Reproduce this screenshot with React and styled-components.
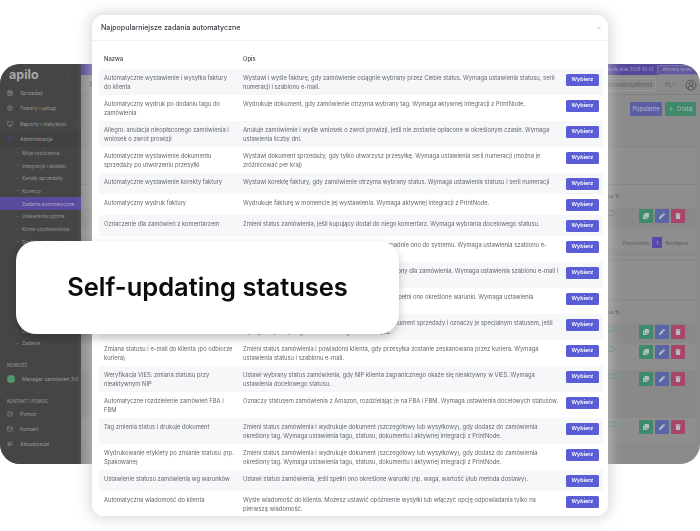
import React from 'react';
import styled, { createGlobalStyle } from 'styled-components';
import {
  CalendarDays,
  Box,
  Monitor,
  Settings,
  ChevronRight,
  ChevronDown,
  ChevronLeft,
  CircleHelp,
  Mail,
  Megaphone,
  CircleUserRound,
  Plus,
  X,
} from 'lucide-react';
import { FaClone, FaPen, FaTrash } from 'react-icons/fa';

const GlobalStyle = createGlobalStyle`
  html, body {
    margin: 0;
    padding: 0;
    background: #fff;
    overflow: hidden;
  }
  * { box-sizing: border-box; }
`;

const Stage = styled.div`
  position: relative;
  width: 700px;
  height: 531px;
  overflow: hidden;
  font-family: Inter, 'Noto Sans', sans-serif;
`;

/* ---------- app behind the dialog ---------- */

const AppWindow = styled.div`
  position: absolute;
  left: 0;
  top: 64px;
  width: 700px;
  height: 400px;
  display: flex;
  border-radius: 20px;
  overflow: hidden;
  background: #8b8b8b;
  filter: blur(0.45px);
`;

const Sidebar = styled.aside`
  width: 81px;
  flex: none;
  background: #454545;
  color: #9a9a9a;
  font-size: 5.1px;
`;

const LogoRow = styled.div`
  height: 21.4px;
  padding: 0 9px 0 9px;
  display: flex;
  align-items: center;
  justify-content: space-between;
`;

const Logo = styled.span`
  font-size: 12.5px;
  font-weight: 700;
  color: #a9a9a9;
`;

const NavItem = styled.div`
  height: 15.3px;
  margin-top: ${(p) => p.$top || 0}px;
  padding: 0 9px 0 7px;
  display: flex;
  align-items: center;
  gap: 7px;
  background: ${(p) => (p.$open ? '#414141' : 'transparent')};

  span {
    flex: 1;
    white-space: nowrap;
  }

  svg {
    flex: none;
  }
`;

const SubItem = styled.div`
  height: 12.7px;
  display: flex;
  align-items: center;
  padding-left: 17px;
  gap: 4px;
  white-space: nowrap;
  font-size: 4.9px;
  background: ${(p) => (p.$active ? '#5a4a9e' : 'transparent')};
  color: ${(p) => (p.$active ? '#b0abc9' : '#959595')};

  &::before {
    content: '';
    width: 1px;
    height: 1px;
    border-radius: 50%;
    background: #8a8a8a;
  }
`;

const GroupLabel = styled.div`
  margin-top: ${(p) => p.$top}px;
  padding-left: 7px;
  height: 8px;
  line-height: 8px;
  font-size: 4.4px;
  font-weight: 500;
  color: #8f8f8f;
`;

const ManagerDot = styled.i`
  width: 8px;
  height: 8px;
  flex: none;
  border-radius: 50%;
  background: #4f9a6d;
`;

const Main = styled.div`
  flex: 1;
  min-width: 0;
  display: flex;
  flex-direction: column;
`;

const TopBar = styled.div`
  height: 11px;
  padding-right: 2px;
  display: flex;
  align-items: center;
  justify-content: flex-end;
  gap: 3px;
  background: #56489a;
  color: #a9a3cf;
  font-size: 4.4px;
  white-space: nowrap;
`;

const ActivateButton = styled.span`
  padding: 1.5px 5px;
  border: 1px solid #7d74ac;
  border-radius: 1.5px;
  background: #5f5899;
`;

const Header = styled.div`
  height: 20px;
  padding: 0 3px 0 8px;
  display: flex;
  align-items: center;
  color: #4f4f4f;
  font-size: 5.6px;
  border-bottom: 1px solid #808080;
`;

const PageTitle = styled.span`
  flex: 1;
  font-weight: 600;
`;

const Search = styled.div`
  width: 120px;
  height: 13px;
  padding-right: 3px;
  display: flex;
  align-items: center;
  justify-content: flex-end;
  border: 1px solid #969696;
  border-radius: 1px;
  color: #5b5b5b;
`;

const Lang = styled.span`
  margin: 0 8px 0 9px;
  display: flex;
  align-items: center;
  color: #5b5b5b;
`;

const Toolbar = styled.div`
  height: 51px;
  padding: 7px 4px 0 0;
  display: flex;
  justify-content: flex-end;
  gap: 3px;
`;

const ToolButton = styled.span`
  width: ${(p) => p.$w}px;
  height: 14px;
  display: flex;
  align-items: center;
  justify-content: center;
  gap: 3px;
  border-radius: 1px;
  background: ${(p) => p.$bg};
  color: #b5bac2;
  font-size: 5.6px;
`;

const Panel = styled.section`
  margin: ${(p) => p.$top || 0}px 4px 0 0;
  background: #8e8e8e;
  border-top: 1px solid #858585;
`;

const PanelHead = styled.div`
  height: ${(p) => p.$h}px;
  border-bottom: 1px solid #848484;
`;

const StatusLabel = styled.div`
  height: ${(p) => p.$h}px;
  padding-right: 76px;
  display: flex;
  align-items: center;
  justify-content: flex-end;
  color: #3f3f3f;
  font-size: 5px;
  font-weight: 500;
`;

const DataRow = styled.div`
  height: ${(p) => p.$h}px;
  padding: 2px 11px 0 0;
  display: flex;
  justify-content: flex-end;
  background: ${(p) => (p.$tint ? '#898989' : 'transparent')};
`;

const Toggle = styled.i`
  width: 8px;
  height: 6px;
  margin: 1px 24px 0 0;
  border-radius: 4px;
  border: 1px solid ${(p) => (p.$on ? '#4a8a64' : '#6a6a6a')};
`;

const Actions = styled.div`
  display: flex;
  gap: 2px;
`;

const ActionButton = styled.span`
  width: 14px;
  height: 14px;
  display: flex;
  align-items: center;
  justify-content: center;
  border-radius: 1px;
  background: ${(p) => p.$bg};
  color: #b5bdc4;
  font-size: 6px;
`;

const Pagination = styled.div`
  margin-top: 9px;
  height: 11px;
  padding-right: 8px;
  display: flex;
  justify-content: flex-end;
  align-items: center;
  gap: 3px;
  color: #5f5f5f;
  font-size: 5px;
`;

const PageNumber = styled.span`
  width: 10px;
  height: 11px;
  display: flex;
  align-items: center;
  justify-content: center;
  background: #5a48a6;
  color: #b9b4d2;
`;

/* ---------- dialog ---------- */

const ModalGlow = styled.div`
  position: absolute;
  left: 92px;
  top: 15px;
  width: 516px;
  height: 501px;
  border-radius: 12px;
  box-shadow: 0 0 14px 2px rgba(200, 200, 200, 0.75);
`;

const Modal = styled.div`
  position: absolute;
  left: 92px;
  top: 15px;
  width: 516px;
  height: 501px;
  border-radius: 12px;
  overflow: hidden;
  background: #fff;
`;

const ModalHeader = styled.div`
  height: 26px;
  padding: 0 6px 0 9px;
  display: flex;
  align-items: center;
  justify-content: space-between;
  border-bottom: 1px solid #eff0f2;
  color: #3c4048;
`;

const ModalTitle = styled.h5`
  margin: 0;
  font-size: 7.1px;
  font-weight: 500;
`;

const ModalBody = styled.div`
  padding: 10px 5px 0 7px;
`;

const Table = styled.table`
  width: 504px;
  table-layout: fixed;
  border-collapse: collapse;
  font-size: 5.8px;
  line-height: 9.5px;
  color: #62666e;
`;

const HeadCell = styled.th`
  padding: 3px 5px 5px;
  height: 17px;
  text-align: left;
  font-size: 5.8px;
  font-weight: 500;
  color: #3c4048;
`;

const Row = styled.tr`
  background: ${(p) => (p.$odd ? '#f6f7f9' : '#fff')};
`;

const Cell = styled.td`
  padding: 4px 5px 3px;
  vertical-align: top;
  white-space: pre;
  overflow: hidden;
`;

const ButtonCell = styled.td`
  padding: 5px 4px 4px 5px;
  vertical-align: top;
`;

const PickButton = styled.span`
  display: flex;
  width: 33px;
  height: 12px;
  align-items: center;
  justify-content: center;
  border-radius: 1.5px;
  background: #5a5dd6;
  color: #fff;
  font-size: 5.4px;
  font-weight: 600;
`;

/* ---------- callout ---------- */

const Callout = styled.div`
  position: absolute;
  left: 16px;
  top: 241px;
  width: 383px;
  height: 93px;
  padding-bottom: 2px;
  display: flex;
  align-items: center;
  justify-content: center;
  border-radius: 20px;
  background: #fff;
  box-shadow: 0 4px 10px rgba(0, 0, 0, 0.22);
  color: #0b0b0f;
  font-size: 25.5px;
  font-weight: 600;
`;

const tasks = [
  ['Automatyczne wystawienie i wysyłka faktury\ndo klienta', 'Wystawi i wyśle fakturę, gdy zamówienie osiągnie wybrany przez Ciebie status. Wymaga ustawienia statusu, serii\nnumeracji i szablonu e-mail.'],
  ['Automatyczny wydruk po dodaniu tagu do\nzamówienia', 'Wydrukuje dokument, gdy zamówienie otrzyma wybrany tag. Wymaga aktywnej integracji z PrintNode.'],
  ['Allegro: anulacja nieopłaconego zamówienia i\nwniosek o zwrot prowizji', 'Anuluje zamówienie i wyśle wniosek o zwrot prowizji, jeśli nie zostanie opłacone w określonym czasie. Wymaga\nustawienia liczby dni.'],
  ['Automatyczne wystawienie dokumentu\nsprzedaży po utworzeniu przesyłki', 'Wystawi dokument sprzedaży, gdy tylko utworzysz przesyłkę. Wymaga ustawienia serii numeracji (można je\nzróżnicować per kraj)'],
  ['Automatyczne wystawienie korekty faktury', 'Wystawi korektę faktury, gdy zamówienie otrzyma wybrany status. Wymaga ustawienia statusu i serii numeracji'],
  ['Automatyczny wydruk faktury', 'Wydrukuje fakturę w momencie jej wystawienia. Wymaga aktywnej integracji z PrintNode.'],
  ['Oznaczenie dla zamówień z komentarzem', 'Zmieni status zamówienia, jeśli kupujący dodał do niego komentarz. Wymaga wybrania docelowego statusu.'],
  ['Powitalny e-mail do klienta', 'Wyśle wiadomość do klienta, gdy tylko zamówienie wpadnie ono do systemu. Wymaga ustawienia szablonu e-\nmail.'],
  ['Automatyczny e-mail z dokumentem', 'Wyśle wiadomość z dokumentem, gdy zostanie wystawiony dla zamówienia. Wymaga ustawienia szablonu e-mail i\ndokumentu.'],
  ['Zmiana statusu według warunków', 'Zmieni status zamówienia, jeśli po dodaniu do systemu spełni ono określone warunki. Wymaga ustawienia\nstatusu.'],
  ['Oznaczenie błędu wystawienia dokumentu', 'Sprawdzi, czy system wystawił dla tego zamówienia dokument sprzedaży i oznaczy je specjalnym statusem, jeśli\nwystąpił błąd. Wymaga ustawienia flagi statusu błędu.'],
  ['Zmiana statusu i e-mail do klienta (po odbiorze\nkuriera)', 'Zmieni status zamówienia i powiadomi klienta, gdy przesyłka zostanie zeskanowana przez kuriera. Wymaga\nustawienia statusu i szablonu e-mail.'],
  ['Weryfikacja VIES: zmiana statusu przy\nnieaktywnym NIP', 'Ustawi wybrany status zamówienia, gdy NIP klienta zagranicznego okaże się nieaktywny w VIES. Wymaga\nustawienia docelowego statusu.'],
  ['Automatyczne rozdzielenie zamówień FBA i\nFBM', 'Oznaczy statusem zamówienia z Amazon, rozdzielając je na FBA i FBM. Wymaga ustawienia docelowych statusów.'],
  ['Tag zmienia status i drukuje dokument', 'Zmieni status zamówienia i wydrukuje dokument (szczegółowy lub wysyłkowy), gdy dodasz do zamówienia\nokreślony tag. Wymaga ustawienia tagu, statusu, dokumentu i aktywnej integracji z PrintNode.'],
  ['Wydrukowanie etykiety po zmianie statusu (np.\nSpakowane)', 'Zmieni status zamówienia i wydrukuje dokument (szczegółowy lub wysyłkowy), gdy dodasz do zamówienia\nokreślony tag. Wymaga ustawienia tagu, statusu, dokumentu i aktywnej integracji z PrintNode.'],
  ['Ustawienie statusu zamówienia wg warunków', 'Ustawi status zamówienia, jeśli spełni ono określone warunki (np. waga, wartość i/lub metoda dostawy).'],
  ['Automatyczna wiadomość do klienta', 'Wyśle wiadomość do klienta. Możesz ustawić opóźnienie wysyłki lub włączyć opcję odpowiadania tylko na\npierwszą wiadomość.'],
];

const adminItems = [
  'Moje rozliczenia',
  'Integracje i dodatki',
  'Kanały sprzedaży',
  'Kurierzy',
  'Zadania automatyczne',
  'Ustawienia ogólne',
  'Konta użytkowników',
  'Szablony dokumentów',
  'Statusy',
  'Tagi',
  'Magazyny',
  'Dokumenty',
  'Numeracje',
  'Płatności',
  'Dostawy',
  'Zadania',
];

function ActionGroup() {
  return (
    <Actions>
      <ActionButton $bg="#3f8a6a"><FaClone /></ActionButton>
      <ActionButton $bg="#5a66a4"><FaPen /></ActionButton>
      <ActionButton $bg="#a8466a"><FaTrash /></ActionButton>
    </Actions>
  );
}

function BackgroundApp() {
  return (
    <AppWindow>
      <Sidebar>
        <LogoRow>
          <Logo>apilo</Logo>
          <ChevronLeft size={8} color="#55489c" />
        </LogoRow>
        <NavItem><CalendarDays size={6} /><span>Sprzedaż</span><ChevronRight size={5} color="#666" /></NavItem>
        <NavItem><Box size={6} /><span>Towary i usługi</span><ChevronRight size={5} color="#666" /></NavItem>
        <NavItem><Monitor size={6} /><span>Raporty i statystyki</span><ChevronRight size={5} color="#666" /></NavItem>
        <NavItem $open><Settings size={6} color="#5a4a9e" /><span>Administracja</span><ChevronDown size={5} color="#666" /></NavItem>
        {adminItems.map((item) => (
          <SubItem key={item} $active={item === 'Zadania automatyczne'}>{item}</SubItem>
        ))}
        <GroupLabel $top={12}>NOWOŚĆ</GroupLabel>
        <NavItem $top={2}><ManagerDot /><span>Manager zamówień 3.0</span></NavItem>
        <GroupLabel $top={11}>KONTAKT I POMOC</GroupLabel>
        <NavItem><CircleHelp size={6} /><span>Pomoc</span></NavItem>
        <NavItem><Mail size={6} /><span>Kontakt</span></NavItem>
        <NavItem><Megaphone size={6} /><span>Aktualizacje</span></NavItem>
      </Sidebar>
      <Main>
        <TopBar>
          <span>Okres próbny trwa do dnia 2026-10-01</span>
          <ActivateButton>Aktywuj konto</ActivateButton>
        </TopBar>
        <Header>
          <PageTitle>Zadania automatyczne</PageTitle>
          <Search>Szukaj zamówienia/klienta</Search>
          <Lang>PL<ChevronDown size={5} /></Lang>
          <CircleUserRound size={12} color="#3f3f3f" strokeWidth={1.3} />
        </Header>
        <Toolbar>
          <ToolButton $w={32} $bg="#5c5ea4">Popularne</ToolButton>
          <ToolButton $w={31} $bg="#3f8a6a"><Plus size={6} />Dodaj</ToolButton>
        </Toolbar>
        <Panel>
          <PanelHead $h={38} />
          <StatusLabel $h={22}>Status %</StatusLabel>
          <DataRow $h={21} $tint>
            <Toggle />
            <ActionGroup />
          </DataRow>
          <Pagination>
            <span>Poprzednia</span>
            <PageNumber>1</PageNumber>
            <span>Następna</span>
          </Pagination>
        </Panel>
        <Panel $top={7}>
          <PanelHead $h={5} />
          <PanelHead $h={40} />
          <StatusLabel $h={22}>Status %</StatusLabel>
          <DataRow $h={20} $tint><Toggle $on /><ActionGroup /></DataRow>
          <DataRow $h={27}><Toggle $on /><ActionGroup /></DataRow>
          <DataRow $h={48} $tint><Toggle $on /><ActionGroup /></DataRow>
          <DataRow $h={24}><Toggle $on /><ActionGroup /></DataRow>
        </Panel>
      </Main>
    </AppWindow>
  );
}

export default function App() {
  return (
    <Stage>
      <GlobalStyle />
      <BackgroundApp />
      <ModalGlow />
      <Modal>
        <ModalHeader>
          <ModalTitle>Najpopularniejsze zadania automatyczne</ModalTitle>
          <X size={6} color="#b8bac0" />
        </ModalHeader>
        <ModalBody>
          <Table>
            <colgroup>
              <col style={{ width: 139 }} />
              <col style={{ width: 323 }} />
              <col style={{ width: 42 }} />
            </colgroup>
            <thead>
              <tr>
                <HeadCell>Nazwa</HeadCell>
                <HeadCell>Opis</HeadCell>
                <HeadCell />
              </tr>
            </thead>
            <tbody>
              {tasks.map(([name, desc], i) => (
                <Row key={name} $odd={i % 2 === 0}>
                  <Cell>{name}</Cell>
                  <Cell>{desc}</Cell>
                  <ButtonCell><PickButton>Wybierz</PickButton></ButtonCell>
                </Row>
              ))}
            </tbody>
          </Table>
        </ModalBody>
      </Modal>
      <Callout>Self-updating statuses</Callout>
    </Stage>
  );
}
